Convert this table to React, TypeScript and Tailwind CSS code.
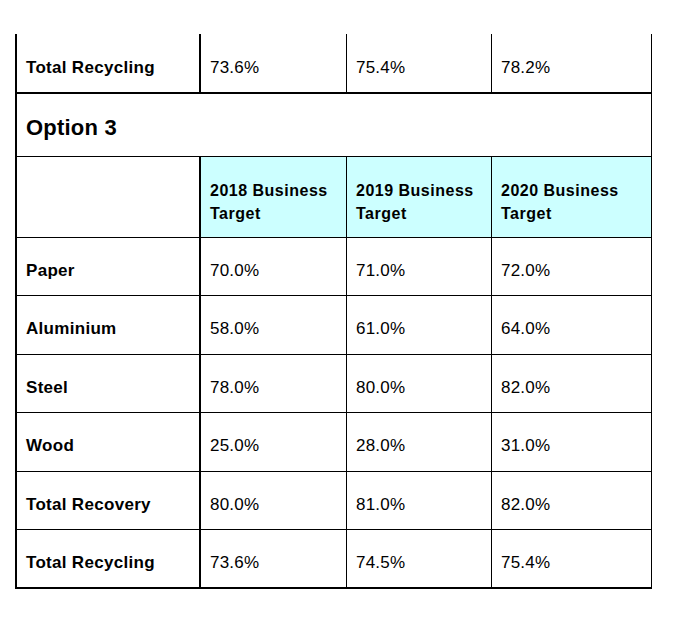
import React from 'react';

interface RowData {
  label: string;
  values: string[];
}

const rows: RowData[] = [
  { label: 'Paper', values: ['70.0%', '71.0%', '72.0%'] },
  { label: 'Aluminium', values: ['58.0%', '61.0%', '64.0%'] },
  { label: 'Steel', values: ['78.0%', '80.0%', '82.0%'] },
  { label: 'Wood', values: ['25.0%', '28.0%', '31.0%'] },
  { label: 'Total Recovery', values: ['80.0%', '81.0%', '82.0%'] },
  { label: 'Total Recycling', values: ['73.6%', '74.5%', '75.4%'] },
];

// heights include the bottom rule
const heights = ['h-[58px]', 'h-[59px]', 'h-[58px]', 'h-[59px]', 'h-[58px]', 'h-[59px]'];

const DataRow: React.FC<{ row: RowData; className: string; pad: string }> = ({ row, className, pad }) => {
  return (
    <div className={`flex border-black ${className}`}>
      <div className={`w-[184px] shrink-0 border-r-2 border-black pl-[9px] ${pad}`}>
        <span className="text-[17px] leading-[19px] font-bold tracking-[0.3px]">{row.label}</span>
      </div>
      <div className={`w-[146px] shrink-0 border-r border-black pl-[9px] ${pad}`}>
        <span className="text-[17px] leading-[19px] tracking-[0.2px]">{row.values[0]}</span>
      </div>
      <div className={`w-[145px] shrink-0 border-r border-black pl-[9px] ${pad}`}>
        <span className="text-[17px] leading-[19px] tracking-[0.2px]">{row.values[1]}</span>
      </div>
      <div className={`flex-1 pl-[9px] ${pad}`}>
        <span className="text-[17px] leading-[19px] tracking-[0.2px]">{row.values[2]}</span>
      </div>
    </div>
  );
};

const HeaderCell: React.FC<{ year: string; className: string }> = ({ year, className }) => (
  <div className={`bg-[#ccffff] pl-[9px] pt-[22px] ${className}`}>
    <div className="text-[16px] leading-[23px] font-bold tracking-[0.5px]">
      {year} Business
      <br />
      Target
    </div>
  </div>
);

export default function App() {
  return (
    <div className="w-[688px] h-[619px] bg-white text-black font-['Liberation_Sans',Arial,sans-serif] pt-[34px] pl-[15px]">
      <div className="w-[637px] border-l-2 border-r border-black">
        <DataRow
          row={{ label: 'Total Recycling', values: ['73.6%', '75.4%', '78.2%'] }}
          className="h-[60px] border-b-2"
          pad="pt-[22px]"
        />

        <div className="h-[63px] border-b border-black pl-[9px] pt-[21px]">
          <span className="text-[22px] leading-[25px] font-bold tracking-[0.2px]">Option 3</span>
        </div>

        <div className="flex h-[81px] border-b border-black">
          <div className="w-[184px] shrink-0 border-r-2 border-black" />
          <HeaderCell year="2018" className="w-[146px] shrink-0 border-r border-black" />
          <HeaderCell year="2019" className="w-[145px] shrink-0 border-r border-black" />
          <HeaderCell year="2020" className="flex-1" />
        </div>

        {rows.map((row, i) => (
          <DataRow
            key={row.label}
            row={row}
            className={`${heights[i]} ${i === rows.length - 1 ? 'border-b-2' : 'border-b'}`}
            pad="pt-[21px]"
          />
        ))}
      </div>
    </div>
  );
}
